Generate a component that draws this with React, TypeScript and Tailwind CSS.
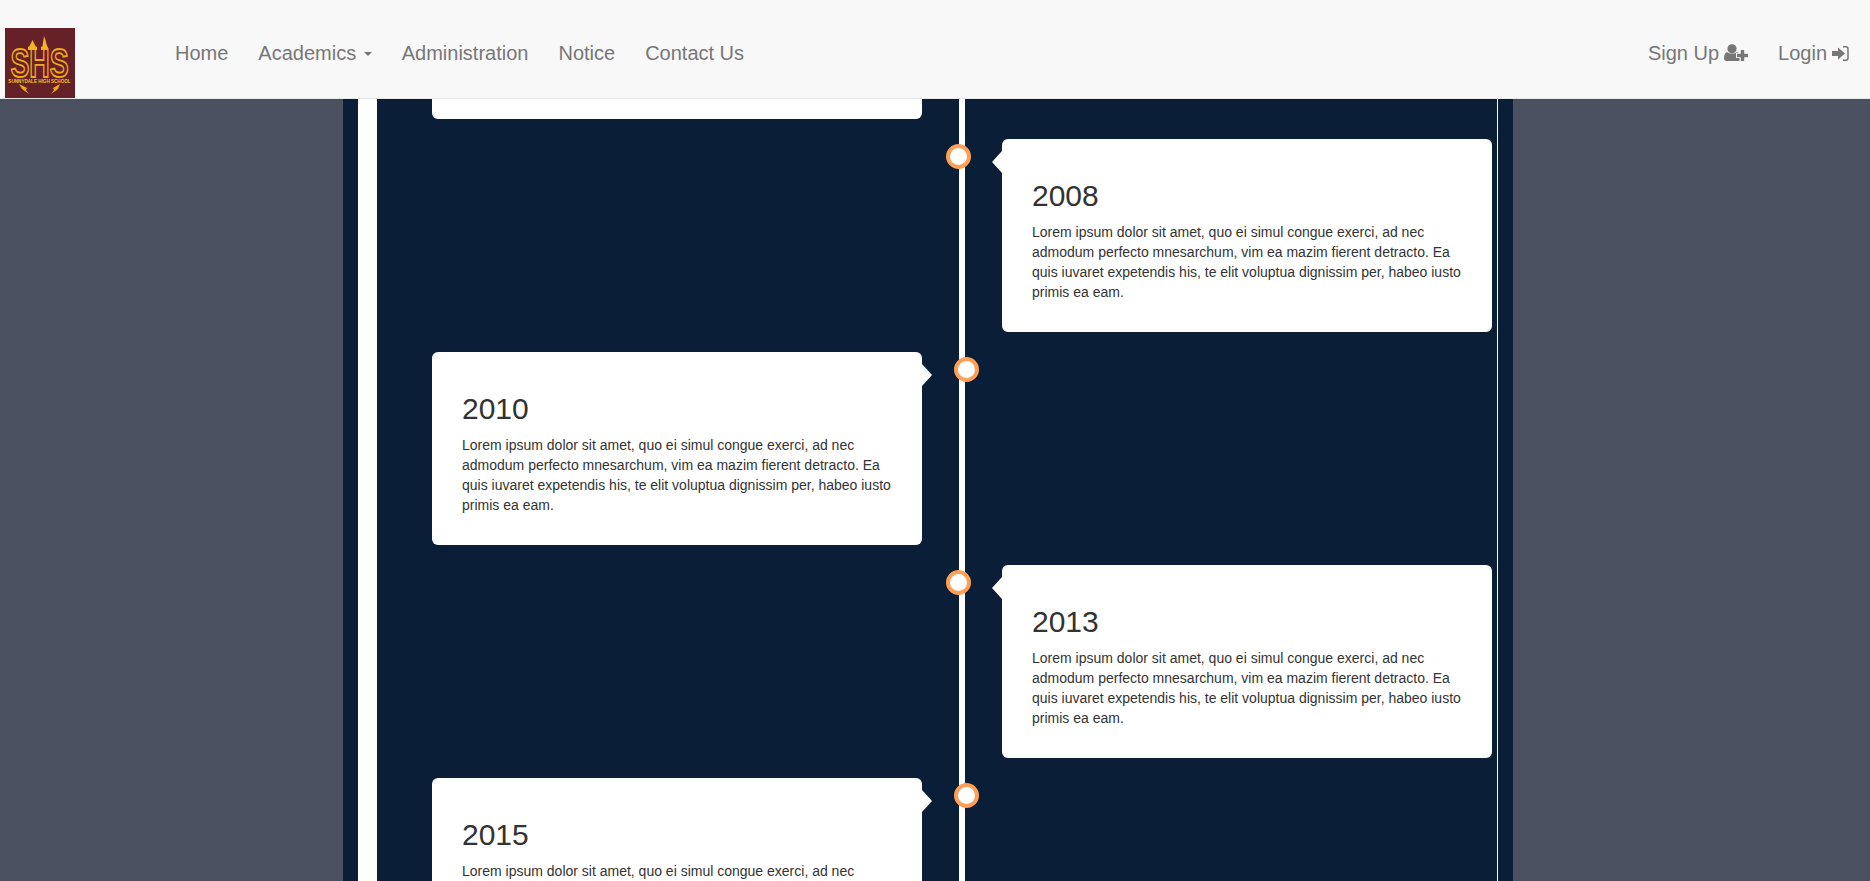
import React from "react";

const LOREM =
  "Lorem ipsum dolor sit amet, quo ei simul congue exerci, ad nec admodum perfecto mnesarchum, vim ea mazim fierent detracto. Ea quis iuvaret expetendis his, te elit voluptua dignissim per, habeo iusto primis ea eam.";

function Logo() {
  return (
    <svg width="70" height="70" viewBox="0 0 70 70" className="block">
      <rect width="70" height="70" fill="#652127" />
      <g transform="translate(34.500 48.500) scale(0.69 1)">
        <text x="0" y="0" textAnchor="middle" fontFamily="'Liberation Sans', sans-serif" fontWeight="700" fontSize="41" fill="#652127" stroke="#f0a91c" strokeWidth="1.800">SHS</text>
      </g>
      <path d="M37.500 18 L39 8 L40.500 12 L42 18 L43 19 L43 22 L36 22 L36 19 Z" fill="#f2b321" />
      <path d="M24.500 18 L27.500 12 L30.500 18 L32 19 L32 22 L23 22 L23 19 Z" fill="#f2b321" />
      <text x="34.500" y="54.500" textAnchor="middle" fontFamily="'Liberation Sans', sans-serif" fontWeight="700" fontSize="4.600" fill="#f5c02e">SUNNYDALE HIGH SCHOOL</text>
      <path d="M14 56 L22 60 L21 62 L24 66 L17 61 Z" fill="#e9a91f" />
      <path d="M55 56 L48 60 L49 62 L46 66 L53 61 Z" fill="#e9a91f" />
    </svg>
  );
}

function UserPlusIcon() {
  return (
    <svg width="24" height="18" viewBox="0 0 24 18" fill="currentColor" className="ml-[5px] shrink-0">
      <circle cx="8" cy="4.800" r="4.600" />
      <path d="M0 14.500 C0 11 1 8.500 3 8 C5 10.300 11 10.300 13 8 L14.500 9 L12 9 L12 14 L15.500 14 L15.500 17 L2.500 17 C1 17 0 16 0 14.500 Z" />
      <rect x="13" y="9.800" width="11" height="3.400" />
      <rect x="16.800" y="6" width="3.400" height="11" />
    </svg>
  );
}

function SignInIcon() {
  return (
    <svg width="17" height="15" viewBox="0 0 17 15" className="ml-[5px] shrink-0">
      <path d="M0 5 H6 V1.500 L13 7.500 L6 13.500 V10 H0 Z" fill="currentColor" />
      <path d="M11 0.800 H14 Q16 0.800 16 3 V12 Q16 14.200 14 14.200 H11" fill="none" stroke="currentColor" strokeWidth="1.500" />
    </svg>
  );
}

function NavLink({ children }: { children: React.ReactNode }) {
  return <a className="flex items-center px-[15px] leading-5 text-[20px] text-[#777777] whitespace-nowrap">{children}</a>;
}

function Card({ year, side }: { year: string; side: "left" | "right" }) {
  const left = side === "left";
  return (
    <div className={`flex mb-5 ${left ? "justify-start pl-[55px]" : "justify-end pr-[5px]"}`}>
      <div className="relative w-[490px] h-[193px] bg-white rounded-[6px] px-[30px] pt-10">
        <h3 className="text-[30px] leading-[33px] text-[#333333] mb-2.5">{year}</h3>
        <p className="text-[14px] leading-5 text-[#333333]">{LOREM}</p>
        {left ? (
          <>
            <span className="absolute left-full top-[12px] border-y-[11px] border-l-[10px] border-y-transparent border-l-white" />
            <span className="absolute left-[522px] top-[5px] w-[25px] h-[25px] rounded-full bg-white border-4 border-[#ff9f55]" />
          </>
        ) : (
          <>
            <span className="absolute right-full top-[12px] border-y-[11px] border-r-[10px] border-y-transparent border-r-white" />
            <span className="absolute left-[-56px] top-[5px] w-[25px] h-[25px] rounded-full bg-white border-4 border-[#ff9f55]" />
          </>
        )}
      </div>
    </div>
  );
}

export default function App() {
  return (
    <div className="h-[881px] overflow-hidden bg-[#4a5060]" style={{ fontFamily: "'Liberation Sans', Arial, sans-serif" }}>
      <header className="h-[99px] flex bg-[#f8f8f8] border-b border-[#e7e7e7]">
        <div className="self-end ml-[5px] w-[70px]">
          <Logo />
        </div>
        <nav className="ml-[85px] flex items-stretch pt-2">
          <NavLink>Home</NavLink>
          <NavLink>
            Academics
            <span className="ml-[7.560px] mt-0.5 border-x-4 border-t-4 border-x-transparent border-t-[#777777]" />
          </NavLink>
          <NavLink>Administration</NavLink>
          <NavLink>Notice</NavLink>
          <NavLink>Contact Us</NavLink>
        </nav>
        <nav className="ml-auto flex items-stretch pt-2 pr-[6px]">
          <NavLink>
            Sign Up
            <UserPlusIcon />
          </NavLink>
          <NavLink>
            Login
            <SignInIcon />
          </NavLink>
        </nav>
      </header>
      <main className="h-[782px] overflow-hidden">
        <div className="ml-[343px] w-[1170px] h-full bg-[#0a1f37] px-[15px]">
          <div className="relative h-full border-l-[19px] border-r border-white">
            <div className="absolute left-[582px] top-0 bottom-0 w-[6px] bg-white" />
            <div className="relative">
              <div className="flex mb-5 pl-[55px]">
                <div className="w-[490px] h-5 bg-white rounded-b-[6px]" />
              </div>
              <Card year="2008" side="right" />
              <Card year="2010" side="left" />
              <Card year="2013" side="right" />
              <Card year="2015" side="left" />
            </div>
          </div>
        </div>
      </main>
    </div>
  );
}
